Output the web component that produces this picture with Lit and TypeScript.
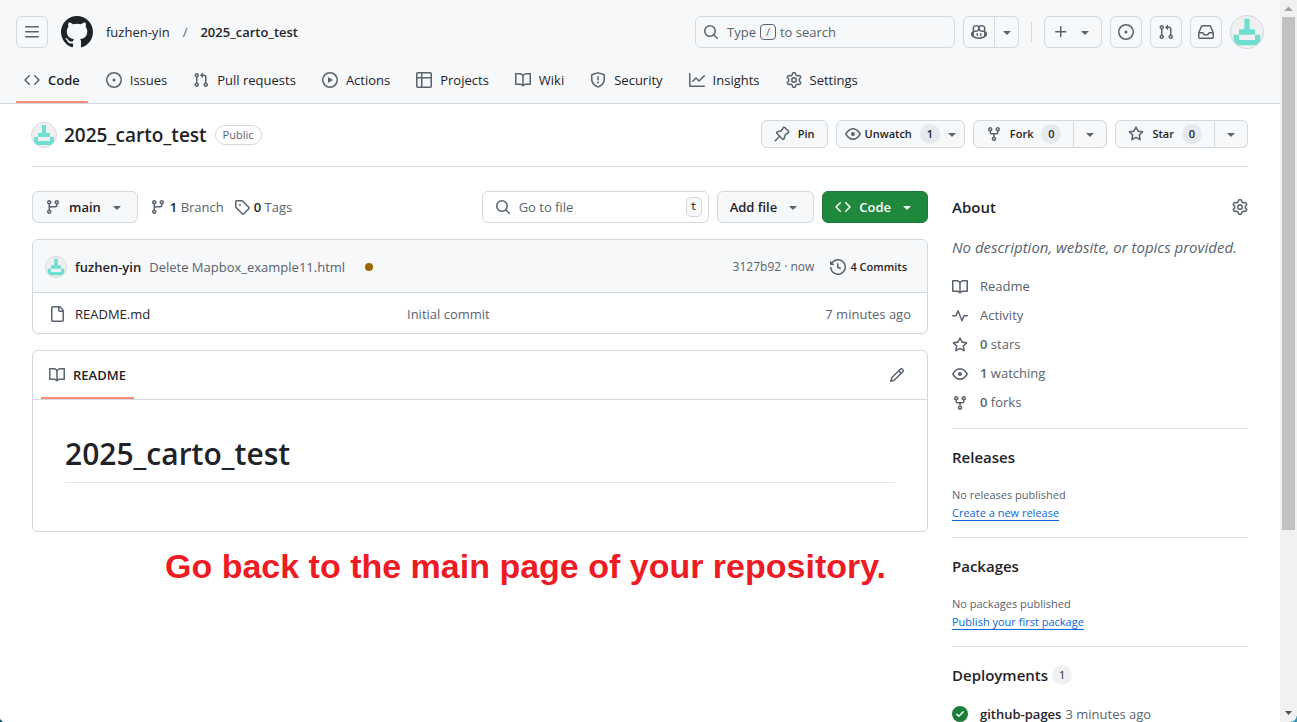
import { LitElement, html, css, svg } from "lit";
import { customElement, property } from "lit/decorators.js";

const ICONS: Record<string, string[]> = {
  bars: ["M1 2.75A.75.75 0 0 1 1.75 2h12.5a.75.75 0 0 1 0 1.5H1.75A.75.75 0 0 1 1 2.75Zm0 5A.75.75 0 0 1 1.75 7h12.5a.75.75 0 0 1 0 1.5H1.75A.75.75 0 0 1 1 7.75ZM1.75 12h12.5a.75.75 0 0 1 0 1.5H1.75a.75.75 0 0 1 0-1.5Z"],
  code: ["m11.28 3.22 4.25 4.25a.75.75 0 0 1 0 1.06l-4.25 4.25a.749.749 0 0 1-1.275-.326.749.749 0 0 1 .215-.734L13.94 8l-3.72-3.72a.749.749 0 0 1 .326-1.275.749.749 0 0 1 .734.215Zm-6.56 0a.751.751 0 0 1 1.042.018.751.751 0 0 1 .018 1.042L2.06 8l3.72 3.72a.749.749 0 0 1-.326 1.275.749.749 0 0 1-.734-.215L.47 8.53a.75.75 0 0 1 0-1.06Z"],
  issue: ["M8 9.5a1.5 1.5 0 1 0 0-3 1.5 1.5 0 0 0 0 3Z", "M8 0a8 8 0 1 1 0 16A8 8 0 0 1 8 0ZM1.5 8a6.5 6.5 0 1 0 13 0 6.5 6.5 0 0 0-13 0Z"],
  pull: ["M1.5 3.25a2.25 2.25 0 1 1 3 2.122v5.256a2.251 2.251 0 1 1-1.5 0V5.372A2.25 2.25 0 0 1 1.5 3.25Zm5.677-.177L9.573.677A.25.25 0 0 1 10 .854V2.5h1A2.5 2.5 0 0 1 13.5 5v5.628a2.251 2.251 0 1 1-1.5 0V5a1 1 0 0 0-1-1h-1v1.646a.25.25 0 0 1-.427.177L7.177 3.427a.25.25 0 0 1 0-.354ZM3.75 2.5a.75.75 0 1 0 0 1.5.75.75 0 0 0 0-1.5Zm0 9.5a.75.75 0 1 0 0 1.5.75.75 0 0 0 0-1.5Zm8.25.75a.75.75 0 1 0 1.5 0 .75.75 0 0 0-1.5 0Z"],
  play: ["M8 0a8 8 0 1 1 0 16A8 8 0 0 1 8 0ZM1.5 8a6.5 6.5 0 1 0 13 0 6.5 6.5 0 0 0-13 0Zm4.879-2.773 4.264 2.559a.25.25 0 0 1 0 .428l-4.264 2.559A.25.25 0 0 1 6 10.559V5.442a.25.25 0 0 1 .379-.215Z"],
  table: ["M0 1.75C0 .784.784 0 1.75 0h12.5C15.216 0 16 .784 16 1.75v12.5A1.75 1.75 0 0 1 14.25 16H1.75A1.75 1.75 0 0 1 0 14.25ZM6.5 6.5v8h7.75a.25.25 0 0 0 .25-.25V6.5Zm8-1.5V1.75a.25.25 0 0 0-.25-.25H6.5V5Zm-13 1.5v7.75c0 .138.112.25.25.25H5v-8ZM5 5V1.5H1.75a.25.25 0 0 0-.25.25V5Z"],
  book: ["M0 1.75A.75.75 0 0 1 .75 1h4.253c1.227 0 2.317.59 3 1.501A3.743 3.743 0 0 1 11.006 1h4.245a.75.75 0 0 1 .75.75v10.5a.75.75 0 0 1-.75.75h-4.507a2.25 2.25 0 0 0-1.591.659l-.622.621a.75.75 0 0 1-1.06 0l-.622-.621A2.25 2.25 0 0 0 5.258 13H.75a.75.75 0 0 1-.75-.75Zm7.251 10.324.004-5.073-.002-2.253A2.25 2.25 0 0 0 5.003 2.5H1.5v9h3.757a3.75 3.75 0 0 1 1.994.574ZM8.755 4.75l-.004 7.322a3.752 3.752 0 0 1 1.992-.572H14.5v-9h-3.495a2.25 2.25 0 0 0-2.25 2.25Z"],
  shield: ["M7.467.133a1.748 1.748 0 0 1 1.066 0l5.25 1.68A1.75 1.75 0 0 1 15 3.48V7c0 1.566-.32 3.182-1.303 4.682-.983 1.498-2.585 2.813-5.032 3.855a1.697 1.697 0 0 1-1.33 0c-2.447-1.042-4.049-2.357-5.032-3.855C1.32 10.182 1 8.566 1 7V3.48a1.75 1.75 0 0 1 1.217-1.667Zm.61 1.429a.25.25 0 0 0-.153 0l-5.25 1.68a.25.25 0 0 0-.174.238V7c0 1.358.275 2.666 1.057 3.86.784 1.194 2.121 2.34 4.366 3.297a.196.196 0 0 0 .154 0c2.245-.956 3.582-2.104 4.366-3.298C13.225 9.666 13.5 8.36 13.5 7V3.48a.251.251 0 0 0-.174-.237l-5.25-1.68ZM8.75 4.75v3a.75.75 0 0 1-1.5 0v-3a.75.75 0 0 1 1.5 0ZM9 10.5a1 1 0 1 1-2 0 1 1 0 0 1 2 0Z"],
  graph: ["M1.5 1.75V13.5h13.75a.75.75 0 0 1 0 1.5H.75a.75.75 0 0 1-.75-.75V1.75a.75.75 0 0 1 1.5 0Zm14.28 2.53-5.25 5.25a.75.75 0 0 1-1.06 0L7 7.06 4.28 9.78a.751.751 0 0 1-1.042-.018.751.751 0 0 1-.018-1.042l3.25-3.25a.75.75 0 0 1 1.06 0L10 7.94l4.72-4.72a.751.751 0 0 1 1.042.018.751.751 0 0 1 .018 1.042Z"],
  gear: ["M8 0a8.2 8.2 0 0 1 .701.031C9.444.095 9.99.645 10.16 1.29l.288 1.107c.018.066.079.158.212.224.231.114.454.243.668.386.123.082.233.09.299.071l1.103-.303c.644-.176 1.392.021 1.82.63.27.385.506.792.704 1.218.315.675.111 1.422-.364 1.891l-.814.806c-.049.048-.098.147-.088.294.016.257.016.515 0 .772-.01.147.038.246.088.294l.814.806c.475.469.679 1.216.364 1.891a7.977 7.977 0 0 1-.704 1.217c-.428.61-1.176.807-1.82.63l-1.102-.302c-.067-.019-.177-.011-.3.071a5.909 5.909 0 0 1-.668.386c-.133.066-.194.158-.211.224l-.29 1.106c-.168.646-.715 1.196-1.458 1.26a8.006 8.006 0 0 1-1.402 0c-.743-.064-1.289-.614-1.458-1.26l-.289-1.106c-.018-.066-.079-.158-.212-.224a5.738 5.738 0 0 1-.668-.386c-.123-.082-.233-.09-.299-.071l-1.103.303c-.644.176-1.392-.021-1.82-.63a8.12 8.12 0 0 1-.704-1.218c-.315-.675-.111-1.422.363-1.891l.815-.806c.05-.048.098-.147.088-.294a6.214 6.214 0 0 1 0-.772c.01-.147-.038-.246-.088-.294l-.815-.806C.635 6.045.431 5.298.746 4.623a7.92 7.92 0 0 1 .704-1.217c.428-.61 1.176-.807 1.82-.63l1.102.302c.067.019.177.011.3-.071.214-.143.437-.272.668-.386.133-.066.194-.158.211-.224l.29-1.106C6.009.645 6.556.095 7.299.03 7.53.01 7.764 0 8 0Zm-.571 1.525c-.036.003-.108.036-.137.146l-.289 1.105c-.147.561-.549.967-.998 1.189-.173.086-.34.183-.5.29-.417.278-.97.423-1.529.27l-1.103-.303c-.109-.03-.175.016-.195.045-.22.312-.412.644-.573.99-.014.031-.021.11.059.19l.815.806c.411.406.562.957.53 1.456a4.709 4.709 0 0 0 0 .582c.032.499-.119 1.05-.53 1.456l-.815.806c-.081.08-.073.159-.059.19.162.346.353.677.573.989.02.03.085.076.195.046l1.102-.303c.56-.153 1.113-.008 1.53.27.161.107.328.204.501.29.447.222.85.629.997 1.189l.289 1.105c.029.109.101.143.137.146a6.6 6.6 0 0 0 1.142 0c.036-.003.108-.036.137-.146l.289-1.105c.147-.561.549-.967.998-1.189.173-.086.34-.183.5-.29.417-.278.97-.423 1.529-.27l1.103.303c.109.029.175-.016.195-.045.22-.313.411-.644.573-.99.014-.031.021-.11-.059-.19l-.815-.806c-.411-.406-.562-.957-.53-1.456a4.709 4.709 0 0 0 0-.582c-.032-.499.119-1.05.53-1.456l.815-.806c.081-.08.073-.159.059-.19a6.464 6.464 0 0 0-.573-.989c-.02-.03-.085-.076-.195-.046l-1.102.303c-.56.153-1.113.008-1.53-.27a4.44 4.44 0 0 0-.501-.29c-.447-.222-.85-.629-.997-1.189l-.289-1.105c-.029-.11-.101-.143-.137-.146a6.6 6.6 0 0 0-1.142 0ZM11 8a3 3 0 1 1-6 0 3 3 0 0 1 6 0ZM9.5 8a1.5 1.5 0 1 0-3.001.001A1.5 1.5 0 0 0 9.5 8Z"],
  search: ["M10.68 11.74a6 6 0 0 1-7.922-8.982 6 6 0 0 1 8.982 7.922l3.04 3.04a.749.749 0 0 1-.326 1.275.749.749 0 0 1-.734-.215ZM11.5 7a4.499 4.499 0 1 0-8.997 0A4.499 4.499 0 0 0 11.5 7Z"],
  copilot: ["M7.998 15.035c-4.562 0-7.873-2.914-7.998-3.749V9.338c.085-.628.677-1.686 1.588-2.065.013-.07.024-.143.036-.218.029-.183.06-.384.126-.612-.201-.508-.254-1.084-.254-1.656 0-.87.128-1.769.693-2.484.579-.733 1.494-1.124 2.724-1.261 1.206-.134 2.262.034 2.944.765.05.053.096.108.139.165.044-.057.094-.112.143-.165.682-.731 1.738-.899 2.944-.765 1.23.137 2.145.528 2.724 1.261.566.715.693 1.614.693 2.484 0 .572-.053 1.148-.254 1.656.066.228.098.429.126.612.012.076.024.148.037.218.924.385 1.522 1.471 1.591 2.095v1.872c0 .766-3.351 3.795-8.002 3.795Zm0-1.485c2.28 0 4.584-1.11 5.002-1.433V7.862l-.023-.116c-.49.21-1.075.291-1.727.291-1.146 0-2.059-.327-2.71-.991A3.222 3.222 0 0 1 8 6.303a3.24 3.24 0 0 1-.544.743c-.65.664-1.563.991-2.71.991-.652 0-1.236-.081-1.727-.291l-.023.116v4.255c.419.323 2.722 1.433 5.002 1.433ZM6.762 2.83c-.193-.206-.637-.413-1.682-.297-1.019.113-1.479.404-1.713.7-.247.312-.369.789-.369 1.554 0 .793.129 1.171.308 1.371.162.181.519.379 1.442.379.853 0 1.339-.235 1.638-.54.315-.322.527-.827.617-1.553.117-.935-.037-1.395-.241-1.614Zm4.155-.297c-1.044-.116-1.488.091-1.681.297-.204.219-.359.679-.242 1.614.091.726.303 1.231.618 1.553.299.305.784.54 1.638.54.922 0 1.28-.198 1.442-.379.179-.2.308-.578.308-1.371 0-.765-.123-1.242-.37-1.554-.233-.296-.693-.587-1.713-.7Z", "M6.25 9.037a.75.75 0 0 1 .75.75v1.501a.75.75 0 0 1-1.5 0V9.787a.75.75 0 0 1 .75-.75Zm4.25.75v1.501a.75.75 0 0 1-1.5 0V9.787a.75.75 0 0 1 1.5 0Z"],
  caret: ["m4.427 7.427 3.396 3.396a.25.25 0 0 0 .354 0l3.396-3.396A.25.25 0 0 0 11.396 7H4.604a.25.25 0 0 0-.177.427Z"],
  plus: ["M7.75 2a.75.75 0 0 1 .75.75V7h4.25a.75.75 0 0 1 0 1.5H8.5v4.25a.75.75 0 0 1-1.5 0V8.5H2.75a.75.75 0 0 1 0-1.5H7V2.75A.75.75 0 0 1 7.75 2Z"],
  inbox: ["M2.8 2.06A1.75 1.75 0 0 1 4.41 1h7.18c.7 0 1.333.417 1.61 1.06l2.74 6.395c.04.093.06.194.06.295v4.5A1.75 1.75 0 0 1 14.25 15H1.75A1.75 1.75 0 0 1 0 13.25v-4.5c0-.101.02-.202.06-.295Zm1.61.44a.25.25 0 0 0-.23.152L1.887 8H4.75a.75.75 0 0 1 .6.3L6.625 10h2.75l1.275-1.7a.75.75 0 0 1 .6-.3h2.863L11.82 2.652a.25.25 0 0 0-.23-.152Zm10.09 7h-2.875l-1.275 1.7a.75.75 0 0 1-.6.3h-3.5a.75.75 0 0 1-.6-.3L4.375 9.5H1.5v3.75c0 .138.112.25.25.25h12.5a.25.25 0 0 0 .25-.25Z"],
  pin: ["m11.294.984 3.722 3.722a1.75 1.75 0 0 1-.504 2.826l-1.327.613a3.089 3.089 0 0 0-1.707 2.084l-.584 2.454c-.317 1.332-1.972 1.8-2.94.832L5.75 11.311 1.78 15.28a.749.749 0 1 1-1.06-1.06l3.969-3.97-2.204-2.204c-.968-.968-.5-2.623.832-2.94l2.454-.584a3.08 3.08 0 0 0 2.084-1.707l.613-1.327a1.75 1.75 0 0 1 2.826-.504ZM6.283 9.723l2.732 2.731a.25.25 0 0 0 .42-.119l.584-2.454a4.586 4.586 0 0 1 2.537-3.098l1.328-.613a.25.25 0 0 0 .072-.404l-3.722-3.722a.25.25 0 0 0-.404.072l-.613 1.328a4.584 4.584 0 0 1-3.098 2.537l-2.454.584a.25.25 0 0 0-.119.42l2.731 2.732Z"],
  eye: ["M8 2c1.981 0 3.671.992 4.933 2.078 1.27 1.091 2.187 2.345 2.637 3.023a1.62 1.62 0 0 1 0 1.798c-.45.678-1.367 1.932-2.637 3.023C11.67 13.008 9.981 14 8 14c-1.981 0-3.671-.992-4.933-2.078C1.797 10.83.88 9.576.43 8.898a1.62 1.62 0 0 1 0-1.798c.45-.677 1.367-1.931 2.637-3.022C4.33 2.992 6.019 2 8 2ZM1.679 7.932a.12.12 0 0 0 0 .136c.411.622 1.241 1.75 2.366 2.717C5.176 11.758 6.527 12.5 8 12.5c1.473 0 2.825-.742 3.955-1.715 1.124-.967 1.954-2.096 2.366-2.717a.12.12 0 0 0 0-.136c-.412-.621-1.242-1.75-2.366-2.717C10.824 4.242 9.473 3.5 8 3.5c-1.473 0-2.825.742-3.955 1.715-1.124.967-1.954 2.096-2.366 2.717ZM8 10a2 2 0 1 1-.001-3.999A2 2 0 0 1 8 10Z"],
  fork: ["M5 5.372v.878c0 .414.336.75.75.75h4.5a.75.75 0 0 0 .75-.75v-.878a2.25 2.25 0 1 1 1.5 0v.878a2.25 2.25 0 0 1-2.25 2.25h-1.5v2.128a2.251 2.251 0 1 1-1.5 0V8.5h-1.5A2.25 2.25 0 0 1 3.5 6.25v-.878a2.25 2.25 0 1 1 1.5 0ZM5 3.25a.75.75 0 1 0-1.5 0 .75.75 0 0 0 1.5 0Zm6.75.75a.75.75 0 1 0 0-1.5.75.75 0 0 0 0 1.5Zm-3 8.75a.75.75 0 1 0-1.5 0 .75.75 0 0 0 1.5 0Z"],
  star: ["M8 .25a.75.75 0 0 1 .673.418l1.882 3.815 4.21.612a.75.75 0 0 1 .416 1.279l-3.046 2.97.719 4.192a.751.751 0 0 1-1.088.791L8 12.347l-3.766 1.98a.75.75 0 0 1-1.088-.79l.72-4.194L.818 6.374a.75.75 0 0 1 .416-1.28l4.21-.611L7.327.668A.75.75 0 0 1 8 .25Zm0 2.445L6.615 5.5a.75.75 0 0 1-.564.41l-3.097.45 2.24 2.184a.75.75 0 0 1 .216.664l-.528 3.084 2.769-1.456a.75.75 0 0 1 .698 0l2.77 1.456-.53-3.084a.75.75 0 0 1 .216-.664l2.24-2.183-3.096-.45a.75.75 0 0 1-.564-.41L8 2.694Z"],
  branch: ["M9.5 3.25a2.25 2.25 0 1 1 3 2.122V6A2.5 2.5 0 0 1 10 8.5H6a1 1 0 0 0-1 1v1.128a2.251 2.251 0 1 1-1.5 0V5.372a2.25 2.25 0 1 1 1.5 0v1.836A2.493 2.493 0 0 1 6 7h4a1 1 0 0 0 1-1v-.628A2.25 2.25 0 0 1 9.5 3.25Zm-6 0a.75.75 0 1 0 1.5 0 .75.75 0 0 0-1.5 0Zm8.25-.75a.75.75 0 1 0 0 1.5.75.75 0 0 0 0-1.5ZM4.25 12a.75.75 0 1 0 0 1.5.75.75 0 0 0 0-1.5Z"],
  tag: ["M1 7.775V2.75C1 1.784 1.784 1 2.75 1h5.025c.464 0 .91.184 1.238.513l6.25 6.25a1.75 1.75 0 0 1 0 2.474l-5.026 5.026a1.75 1.75 0 0 1-2.474 0l-6.25-6.25A1.752 1.752 0 0 1 1 7.775Zm1.5 0c0 .066.026.13.073.177l6.25 6.25a.25.25 0 0 0 .354 0l5.025-5.025a.25.25 0 0 0 0-.354l-6.25-6.25a.25.25 0 0 0-.177-.073H2.75a.25.25 0 0 0-.25.25ZM6 5a1 1 0 1 1 0 2 1 1 0 0 1 0-2Z"],
  history: ["m.427 1.927 1.215 1.215a8.002 8.002 0 1 1-1.6 5.685.75.75 0 1 1 1.493-.154 6.5 6.5 0 1 0 1.18-4.458l1.358 1.358A.25.25 0 0 1 3.896 6H.25A.25.25 0 0 1 0 5.75V2.104a.25.25 0 0 1 .427-.177ZM7.75 4a.75.75 0 0 1 .75.75v2.992l2.028.812a.75.75 0 0 1-.557 1.392l-2.5-1A.751.751 0 0 1 7 8.250v-3.5A.75.75 0 0 1 7.75 4Z"],
  file: ["M2 1.75C2 .784 2.784 0 3.75 0h6.586c.464 0 .909.184 1.237.513l2.914 2.914c.329.328.513.773.513 1.237v9.586A1.75 1.75 0 0 1 13.25 16h-9.5A1.75 1.75 0 0 1 2 14.25Zm1.75-.25a.25.25 0 0 0-.25.25v12.5c0 .138.112.25.25.25h9.5a.25.25 0 0 0 .25-.25V6h-2.75A1.75 1.75 0 0 1 9 4.25V1.5Zm6.75.062V4.25c0 .138.112.25.25.25h2.688l-.011-.013-2.914-2.914-.013-.011Z"],
  pencil: ["M11.013 1.427a1.75 1.75 0 0 1 2.474 0l1.086 1.086a1.75 1.75 0 0 1 0 2.474l-8.61 8.61c-.21.21-.47.364-.756.445l-3.251.93a.75.75 0 0 1-.927-.928l.929-3.25c.081-.286.235-.547.445-.758l8.61-8.61Zm.176 4.823L9.75 4.81l-6.286 6.287a.253.253 0 0 0-.064.108l-.558 1.953 1.953-.558a.253.253 0 0 0 .108-.064Zm1.238-3.763a.25.25 0 0 0-.354 0L10.811 3.75l1.439 1.44 1.263-1.263a.25.25 0 0 0 0-.354Z"],
  pulse: ["M6 2c.306 0 .582.187.696.471L10 10.731l1.304-3.26A.751.751 0 0 1 12 7h3.25a.75.75 0 0 1 0 1.5h-2.742l-1.812 4.528a.751.751 0 0 1-1.392 0L6 4.77 4.696 8.03A.75.75 0 0 1 4 8.5H.75a.75.75 0 0 1 0-1.5h2.742l1.812-4.529A.751.751 0 0 1 6 2Z"],
  dot: ["M8 4a4 4 0 1 1 0 8 4 4 0 0 1 0-8Z"],
  check: ["M8 16A8 8 0 1 1 8 0a8 8 0 0 1 0 16Zm3.78-9.72a.751.751 0 0 0-.018-1.042.751.751 0 0 0-1.042-.018L6.75 9.19 5.28 7.72a.751.751 0 0 0-1.042.018.751.751 0 0 0-.018 1.042l2 2a.75.75 0 0 0 1.06 0Z"],
};

const MARK =
  "M12 1C5.9225 1 1 5.9225 1 12C1 16.8675 4.14875 20.9787 8.52125 22.4362C9.07125 22.5325 9.2775 22.2025 9.2775 21.9137C9.2775 21.6525 9.26375 20.7862 9.26375 19.865C6.5 20.3737 5.785 19.1912 5.565 18.5725C5.44125 18.2562 4.905 17.28 4.4375 17.0187C4.0525 16.8125 3.5025 16.3037 4.42375 16.29C5.29 16.2762 5.90875 17.0875 6.115 17.4175C7.105 19.0812 8.68625 18.6137 9.31875 18.325C9.415 17.61 9.70375 17.1287 10.02 16.8537C7.5725 16.5787 5.015 15.63 5.015 11.4225C5.015 10.2262 5.44125 9.23625 6.1425 8.46625C6.0325 8.19125 5.6475 7.06375 6.2525 5.55125C6.2525 5.55125 7.17375 5.2625 9.2775 6.67875C10.1575 6.43125 11.0925 6.3075 12.0275 6.3075C12.9625 6.3075 13.8975 6.43125 14.7775 6.67875C16.8813 5.24875 17.8025 5.55125 17.8025 5.55125C18.4075 7.06375 18.0225 8.19125 17.9125 8.46625C18.6138 9.23625 19.04 10.2125 19.04 11.4225C19.04 15.6437 16.4688 16.5787 14.0213 16.8537C14.42 17.1975 14.7638 17.8575 14.7638 18.8887C14.7638 20.36 14.75 21.5425 14.75 21.9137C14.75 22.2025 14.9563 22.5462 15.5063 22.4362C19.8513 20.9787 23 16.8537 23 12C23 5.9225 18.0775 1 12 1Z";

@customElement("oct-icon")
class OctIcon extends LitElement {
  static styles = css`
    :host { display: inline-flex; flex: none; width: 16px; height: 16px; }
    .glyph { width: 100%; height: 100%; fill: currentColor; }
  `;
  @property() name = "";
  render() {
    return html`<svg class="glyph" viewBox="0 0 16 16" aria-hidden="true">
      ${(ICONS[this.name] ?? []).map((d) => svg`<path d=${d}></path>`)}
    </svg>`;
  }
}

/* Five-by-five block avatar inside a round frame. */
@customElement("user-avatar")
class UserAvatar extends LitElement {
  static styles = css`
    :host {
      display: inline-flex; flex: none; box-sizing: border-box; width: 24px; height: 24px;
      border-radius: 50%; overflow: hidden; background: #f0f0f0; border: 1px solid #d5d9dd;
    }
    .art { width: 100%; height: 100%; }
  `;
  render() {
    return html`<svg class="art" viewBox="0 0 12 12" role="img" aria-label="fuzhen-yin">
      <path fill="#6ddecf" d="M5 1h2v4h2v2h2v4H1V7h2V5h2ZM3 7v2h6V7Z" fill-rule="evenodd"></path>
    </svg>`;
  }
}

const TABS = [
  ["code", "Code"], ["issue", "Issues"], ["pull", "Pull requests"], ["play", "Actions"],
  ["table", "Projects"], ["book", "Wiki"], ["shield", "Security"], ["graph", "Insights"], ["gear", "Settings"],
];

const FACTS = [
  ["book", "", "Readme"], ["pulse", "", "Activity"], ["star", "0", "stars"],
  ["eye", "1", "watching"], ["fork", "0", "forks"],
];

@customElement("app-root")
class AppRoot extends LitElement {
  static styles = css`
    :host {
      display: flex; position: relative; height: 100vh; overflow: hidden; background: #fff; color: #1f2328;
      font: 13px/20px "Open Sans", "Noto Sans", sans-serif;
    }
    :host::before, :host::after { content: ""; position: absolute; bottom: 0; width: 6px; height: 6px; }
    :host::before { left: 0; background: radial-gradient(circle at 100% 0, transparent 6px, #12495c 7px); }
    :host::after { right: 0; background: radial-gradient(circle at 0 0, transparent 5px, #3f93a8 6px); }
    * { box-sizing: border-box; }
    a { color: inherit; text-decoration: none; }
    button, input { font: inherit; color: inherit; margin: 0; }
    h1, h2, p, ul { margin: 0; padding: 0; }
    ul { list-style: none; }
    b, .strong { font-weight: 600; }
    oct-icon, .muted { color: #59636e; }

    .page { flex: 1; min-width: 0; }
    .top { background: #f6f8fa; border-bottom: 1px solid #d1d9e0; padding: 16px 16px 0; }
    .bar { display: flex; align-items: center; height: 32px; gap: 8px; }
    .btn {
      display: inline-flex; align-items: center; justify-content: center; height: 32px; padding: 0 12px; gap: 8px;
      border: 1px solid #d1d9e0; border-radius: 6px; background: #f6f8fa; white-space: nowrap;
    }
    .square { width: 32px; padding: 0; }
    .mark { width: 32px; height: 32px; margin: 0 5px; fill: #1f2328; }
    .crumbs { display: flex; gap: 13px; margin-right: auto; }
    .find { width: 260px; padding: 0 7px; justify-content: flex-start; color: #59636e; }
    .find-text { display: flex; gap: 4px; align-items: center; }
    .slash { border: 1px solid #59636e; border-radius: 4px; width: 16px; height: 16px; font: 11px/14px "Open Sans", sans-serif; text-align: center; }
    .split { display: flex; }
    .split .btn:first-child { border-radius: 6px 0 0 6px; }
    .split .btn:last-child { border-radius: 0 6px 6px 0; border-left: 0; padding: 0; }
    .split .narrow { width: 24px; }
    .split .wide { width: 33px; }
    .rule { width: 1px; height: 20px; background: #d1d9e0; margin: 0 4px; }
    .me { width: 34px; height: 34px; }
    .add { width: 58px; padding: 0; }

    .tabs { display: flex; gap: 10px; margin-top: 8px; }
    .tab { display: flex; align-items: center; gap: 8px; height: 47px; padding: 2px 8px 0; border-bottom: 2px solid transparent; }
    .tab.on { border-color: #fd8c73; font-weight: 600; }

    .body { padding: 16px 32px 0; }
    .title { display: flex; align-items: center; gap: 8px; padding-bottom: 18px; border-bottom: 1px solid #d1d9e0; }
    .ident { display: flex; align-items: center; gap: 8px; height: 28px; padding-top: 2px; margin-right: auto; }
    .ident user-avatar { width: 26px; height: 26px; margin: 0 -1px; }
    .name { font-size: 19px; line-height: 28px; font-weight: 600; }
    .pill { border: 1px solid #d1d9e0; border-radius: 10px; padding: 0 7px; font-size: 11px; line-height: 18px; font-weight: 500; color: #59636e; }
    .title .btn { height: 28px; font-size: 11px; font-weight: 600; }
    .title .watch { gap: 4px; padding: 0 4px 0 8px; }
    .watch .count { margin-left: 4px; }
    .count { background: #e6eaef; border-radius: 10px; min-width: 20px; line-height: 20px; padding: 0 6px; text-align: center; }

    .grid { display: grid; grid-template-columns: minmax(0, 1fr) 296px; gap: 24px; padding-top: 24px; }
    .tools { display: flex; align-items: center; gap: 8px; }
    .tools .btn { font-weight: 600; }
    .stats { display: flex; gap: 10px; margin: 0 auto 0 4px; }
    .stat { display: flex; align-items: center; gap: 4px; color: #59636e; }
    .stat b { color: #1f2328; }
    .box-find { display: flex; align-items: center; gap: 8px; width: 227px; height: 32px; padding: 0 6px 0 12px; border: 1px solid #d1d9e0; border-radius: 6px; }
    .box-find input { flex: 1; min-width: 0; border: 0; padding: 0; outline: 0; background: none; }
    .box-find input::placeholder { color: #59636e; opacity: 1; }
    .key { border: 1px solid #d1d9e0; border-radius: 5px; background: #f6f8fa; width: 16px; height: 20px; font: 11px/18px "DejaVu Sans Mono", monospace; text-align: center; }
    .go { background: #1f883d; border-color: #1f7a38; color: #fff; }
    .go oct-icon { color: #fff; }

    .card { border: 1px solid #d1d9e0; border-radius: 6px; margin-top: 16px; overflow: hidden; }
    .commit { display: flex; align-items: center; gap: 8px; height: 53px; padding: 1px 20px 0 12px; background: #f6f8fa; border-bottom: 1px solid #d1d9e0; }
    .commit user-avatar { width: 22px; height: 22px; }
    .commit .pending { color: #9a6700; margin: 0 auto 0 8px; }
    .small { font-size: 12px; }
    .history { display: flex; align-items: center; gap: 4px; margin-left: 8px; font-size: 11px; font-weight: 600; }
    .files { width: 100%; border-collapse: collapse; table-layout: fixed; }
    .files td { height: 40px; padding: 2px 16px 0; color: #59636e; }
    .files .c1 { width: 358px; }
    .files .c3 { text-align: right; }
    .file { display: flex; align-items: center; gap: 10px; color: #1f2328; }
    .readme-head { display: flex; justify-content: space-between; align-items: center; height: 49px; padding: 0 14px 0 8px; border-bottom: 1px solid #d1d9e0; }
    .readme-tab { display: flex; align-items: center; gap: 8px; height: 48px; padding: 2px 8px 0; border-bottom: 2px solid #fd8c73; font-weight: 600; }
    .ghost { display: flex; align-items: center; justify-content: center; width: 32px; height: 32px; border: 0; background: none; padding: 0; }
    .readme { padding: 32px 32px 48px; }
    .readme h1 { font-size: 30px; line-height: 44px; font-weight: 600; padding-bottom: 6px; border-bottom: 1px solid #d1d9e0b3; }
    .note { margin-top: 12px; padding-left: 133px; font: bold 34px/44px "Liberation Sans", Arial, sans-serif; color: #ed1c24; white-space: nowrap; }

    .side h2 { display: flex; align-items: center; justify-content: space-between; font-size: 15px; line-height: 24px; font-weight: 600; }
    .about { padding: 4px 0 15px; }
    .about p { margin: 16px 0 17px; font-size: 15px; line-height: 24px; font-style: italic; color: #59636e; white-space: nowrap; }
    .facts { display: flex; flex-direction: column; gap: 8px; }
    .fact { display: flex; align-items: center; gap: 12px; line-height: 21px; color: #59636e; }
    .section { border-top: 1px solid #d1d9e0b3; padding: 16px 0 15px; font-size: 11px; line-height: 18px; color: #59636e; }
    .section h2 { color: #1f2328; margin-bottom: 17px; }
    .section h2.left { justify-content: flex-start; gap: 4px; }
    .section h2 .count { font-size: 11px; font-weight: 500; background: #eff1f3; }
    .blue { color: #0969da; text-decoration: underline; text-underline-offset: 3px; }
    .deploy { display: flex; align-items: center; gap: 4px; font-size: 13px; line-height: 20px; }
    .deploy oct-icon { color: #1a7f37; margin-right: 8px; }
    .deploy b { color: #1f2328; }

    .scroll { flex: none; width: 17px; display: flex; flex-direction: column; align-items: center; background: #f1f1f1; }
    .arrow { width: 17px; height: 17px; flex: none; }
    .thumb { width: 13px; height: 71%; background: #c1c1c1; margin-bottom: auto; }
  `;

  render() {
    return html`
      <div class="page">
        <header class="top">
          <div class="bar">
            <button class="btn square" aria-label="Open menu"><oct-icon name="bars"></oct-icon></button>
            <a href="#" aria-label="Homepage" class="split"><svg class="mark" viewBox="1 1 22 22"><path d=${MARK}></path></svg></a>
            <nav class="crumbs" aria-label="Breadcrumb">
              <a href="#">fuzhen-yin</a><span class="muted">/</span><a href="#" class="strong">2025_carto_test</a>
            </nav>
            <button class="btn find">
              <oct-icon name="search"></oct-icon>
              <span class="find-text">Type <kbd class="slash">/</kbd> to search</span>
            </button>
            <div class="split">
              <button class="btn square" aria-label="Chat with Copilot"><oct-icon name="copilot"></oct-icon></button>
              <button class="btn narrow" aria-label="Copilot menu"><oct-icon name="caret"></oct-icon></button>
            </div>
            <span class="rule"></span>
            <button class="btn add" aria-label="Create new"><oct-icon name="plus"></oct-icon><oct-icon name="caret"></oct-icon></button>
            <button class="btn square" aria-label="Issues"><oct-icon name="issue"></oct-icon></button>
            <button class="btn square" aria-label="Pull requests"><oct-icon name="pull"></oct-icon></button>
            <button class="btn square" aria-label="Notifications"><oct-icon name="inbox"></oct-icon></button>
            <user-avatar class="me"></user-avatar>
          </div>
          <nav class="tabs" aria-label="Repository">
            ${TABS.map(([icon, label], i) => html`<a href="#" class="tab ${i === 0 ? "on" : ""}"><oct-icon name=${icon}></oct-icon>${label}</a>`)}
          </nav>
        </header>

        <main class="body">
          <div class="title">
            <div class="ident">
              <user-avatar></user-avatar>
              <a href="#" class="name">2025_carto_test</a>
              <span class="pill">Public</span>
            </div>
            <button class="btn"><oct-icon name="pin"></oct-icon>Pin</button>
            <button class="btn watch"><oct-icon name="eye"></oct-icon>Unwatch<span class="count">1</span><oct-icon name="caret"></oct-icon></button>
            <div class="split">
              <button class="btn"><oct-icon name="fork"></oct-icon>Fork<span class="count">0</span></button>
              <button class="btn wide" aria-label="Fork menu"><oct-icon name="caret"></oct-icon></button>
            </div>
            <div class="split">
              <button class="btn"><oct-icon name="star"></oct-icon>Star<span class="count">0</span></button>
              <button class="btn wide" aria-label="Star menu"><oct-icon name="caret"></oct-icon></button>
            </div>
          </div>

          <div class="grid">
            <div>
              <div class="tools">
                <button class="btn"><oct-icon name="branch"></oct-icon>main<oct-icon name="caret"></oct-icon></button>
                <div class="stats">
                  <a href="#" class="stat"><oct-icon name="branch"></oct-icon><span><b>1</b> Branch</span></a>
                  <a href="#" class="stat"><oct-icon name="tag"></oct-icon><span><b>0</b> Tags</span></a>
                </div>
                <label class="box-find">
                  <oct-icon name="search"></oct-icon>
                  <input type="text" placeholder="Go to file" aria-label="Go to file" />
                  <kbd class="key">t</kbd>
                </label>
                <button class="btn">Add file<oct-icon name="caret"></oct-icon></button>
                <button class="btn go"><oct-icon name="code"></oct-icon>Code<oct-icon name="caret"></oct-icon></button>
              </div>

              <section class="card">
                <div class="commit">
                  <user-avatar></user-avatar>
                  <a href="#" class="strong">fuzhen-yin</a>
                  <a href="#" class="muted">Delete Mapbox_example11.html</a>
                  <oct-icon class="pending" name="dot"></oct-icon>
                  <span class="small muted">3127b92 · now</span>
                  <a href="#" class="history"><oct-icon name="history"></oct-icon>4 Commits</a>
                </div>
                <table class="files">
                  <tr>
                    <td class="c1"><a href="#" class="file"><oct-icon name="file"></oct-icon>README.md</a></td>
                    <td>Initial commit</td>
                    <td class="c3">7 minutes ago</td>
                  </tr>
                </table>
              </section>

              <section class="card">
                <div class="readme-head">
                  <a href="#" class="readme-tab"><oct-icon name="book"></oct-icon>README</a>
                  <button class="ghost" aria-label="Edit file"><oct-icon name="pencil"></oct-icon></button>
                </div>
                <div class="readme"><h1>2025_carto_test</h1></div>
              </section>
              <p class="note">Go back to the main page of your repository.</p>
            </div>

            <aside class="side">
              <section class="about">
                <h2>About<oct-icon name="gear"></oct-icon></h2>
                <p>No description, website, or topics provided.</p>
                <ul class="facts">
                  ${FACTS.map(([icon, n, label]) => html`<li><a href="#" class="fact"><oct-icon name=${icon}></oct-icon><span>${n ? html`<b>${n}</b> ` : ""}${label}</span></a></li>`)}
                </ul>
              </section>
              <section class="section">
                <h2>Releases</h2>
                <p>No releases published</p>
                <a href="#" class="blue">Create a new release</a>
              </section>
              <section class="section">
                <h2>Packages</h2>
                <p>No packages published</p>
                <a href="#" class="blue">Publish your first package</a>
              </section>
              <section class="section">
                <h2 class="left">Deployments<span class="count">1</span></h2>
                <a href="#" class="deploy"><oct-icon name="check"></oct-icon><b>github-pages</b> 3 minutes ago</a>
              </section>
            </aside>
          </div>
        </main>
      </div>

      <div class="scroll" aria-hidden="true">
        <svg class="arrow" viewBox="0 0 17 17"><path fill="#a3a3a3" d="M4 11h9L8.500 6.500Z"></path></svg>
        <div class="thumb"></div>
        <svg class="arrow" viewBox="0 0 17 17"><path fill="#505050" d="M5 6h7L8.500 10Z"></path></svg>
      </div>
    `;
  }
}
